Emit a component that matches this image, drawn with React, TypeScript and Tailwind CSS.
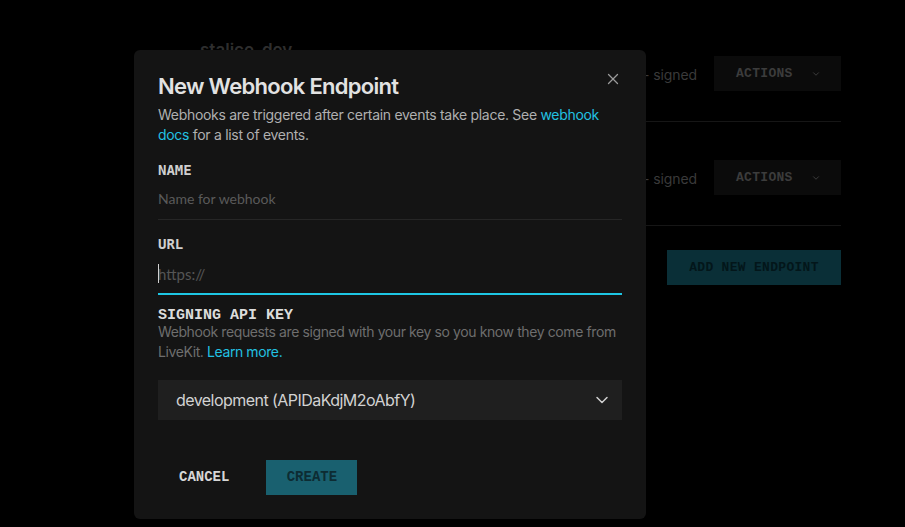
import { X, ChevronDown } from 'lucide-react';

const sans = { fontFamily: 'Inter, "Noto Sans", sans-serif' };
const lato = { fontFamily: 'Lato, "Open Sans", sans-serif' };
const mono = { fontFamily: '"Liberation Mono", "DejaVu Sans Mono", monospace' };
const dejaMono = { fontFamily: '"DejaVu Sans Mono", "Liberation Mono", monospace' };

// dimmed page behind the modal
function WebhookRow({ name }: { name: string }) {
  return (
    <div className="flex items-start border-b border-[#161616] pt-[20px] pb-[30px]">
      <div className="flex-1 pl-[20px]" style={sans}>
        <div className="h-[24px] text-[17px] font-semibold leading-[24px] text-[#2e2e2e]">{name}</div>
        <div className="mt-[2px] text-right text-[14px] leading-[22px] tracking-[-0.1px] text-[#3a3a3a]">
          - signed
        </div>
      </div>
      <button
        className="mt-[18px] ml-[17px] flex h-[35px] w-[127px] items-center gap-[18px] bg-[#0b0b0b] pl-[22px] text-[13px] font-bold tracking-[0.3px] text-[#3c3c3c]"
        style={mono}
      >
        ACTIONS
        <ChevronDown size={10} strokeWidth={2} className="text-[#444]" />
      </button>
    </div>
  );
}

function Field({ label, children }: { label: string; children: React.ReactNode }) {
  return (
    <div>
      <div className="text-[14px] font-bold leading-[20px] text-[#cfcfcf]" style={dejaMono}>
        {label}
      </div>
      {children}
    </div>
  );
}

export default function App() {
  return (
    <div className="relative h-[527px] w-[905px] overflow-hidden bg-black">
      <div className="ml-[180px] flex w-[661px] flex-col pt-[18px]">
        <WebhookRow name="stalice-dev" />
        <WebhookRow name="stalice-prod" />
        <button
          className="mt-[24px] h-[35px] w-[174px] self-end bg-[#0a2f37] text-[13px] font-bold tracking-[0.3px] text-[#03161a]"
          style={mono}
        >
          ADD NEW ENDPOINT
        </button>
      </div>

      {/* Modal */}
      <div className="absolute left-[134px] top-[50px] h-[469px] w-[512px] rounded-[6px] bg-[#141414] px-[24px] pt-[22px]">
        <button className="absolute right-[24px] top-[20px] text-[#9a9a9a]">
          <X size={18} strokeWidth={1.75} />
        </button>

        <h2
          className="text-[22px] font-semibold leading-[28px] tracking-[-0.7px] text-[#e2e2e2]"
          style={sans}
        >
          New Webhook Endpoint
        </h2>
        <p className="mt-[5px] text-[14px] leading-[20px] tracking-[-0.3px] text-[#b0b0b0]" style={sans}>
          Webhooks are triggered after certain events take place. See{' '}
          <a className="text-[#22c1e2]">webhook</a> <a className="text-[#22c1e2]">docs</a> for a list of
          events.
        </p>

        <div className="mt-[15px]">
          <Field label="NAME">
            <div
              className="border-b border-[#262626] pt-[9px] pb-[10px] text-[14px] leading-[20px] text-[#5a5a5a]"
              style={lato}
            >
              Name for webhook
            </div>
          </Field>
        </div>

        <div className="mt-[14px]">
          <Field label="URL">
            <div
              className="relative border-b-2 border-[#1ec6e4] pt-[10px] pb-[9px] text-[15px] leading-[20px] text-[#555]"
              style={lato}
            >
              <span className="absolute left-0 top-[10px] h-[19px] w-px bg-[#d0d0d0]" />
              https://
            </div>
          </Field>
        </div>

        <div className="mt-[17px] text-[15px] font-bold leading-[8px] text-[#dcdcdc]" style={mono}>
          SIGNING API KEY
        </div>
        <p className="-mr-[6px] mt-[2px] text-[14px] leading-[20px] tracking-[-0.4px] text-[#6e6e6e]" style={sans}>
          Webhook requests are signed with your key so you know they come from <span>LiveKit.</span>
          <a className="ml-[3.5px] text-[#22c1e2]">Learn more.</a>
        </p>

        <div className="mt-[18px] flex h-[40px] items-center justify-between bg-[#1f1f1f] pl-[18px] pr-[10px]">
          <span className="text-[16px] tracking-[-0.55px] text-[#d2d2d2]" style={sans}>
            development (APIDaKdjM2oAbfY)
          </span>
          <ChevronDown size={20} strokeWidth={1.8} className="text-[#d0d0d0]" />
        </div>

        <div className="mt-[40px] flex gap-[16px]">
          <button className="h-[35px] px-[21px] text-[14px] font-bold text-[#d6d6d6]" style={mono}>
            CANCEL
          </button>
          <button
            className="h-[35px] w-[91px] bg-[#19606f] text-[14px] font-bold text-[#0d2c33]"
            style={mono}
          >
            CREATE
          </button>
        </div>
      </div>
    </div>
  );
}
